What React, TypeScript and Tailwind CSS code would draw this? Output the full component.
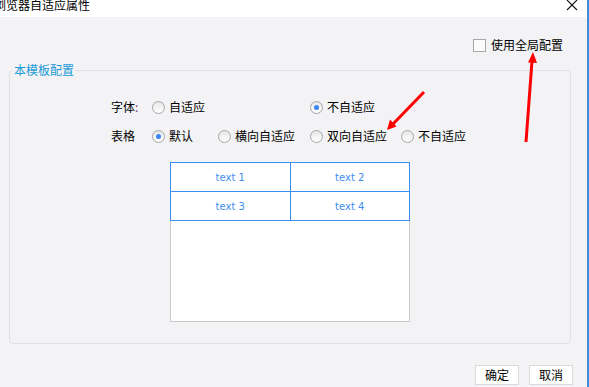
import React from 'react';

const Radio = ({ checked }: { checked?: boolean }) => (
    <span className="w-[13px] h-[13px] shrink-0 rounded-full border border-[#a6a6a6] bg-linear-to-b from-[#e6e6e6] to-white flex items-center justify-center">
        {checked && <span className="w-[5px] h-[5px] rounded-full bg-[#3b87f2]" />}
    </span>
);

const Option = ({ label, checked, w }: { label: string; checked?: boolean; w: string }) => (
    <label className={`flex items-center gap-[4px] ${w}`}>
        <Radio checked={checked} />
        <span>{label}</span>
    </label>
);

export default function App() {
    const cells = ['text 1', 'text 2', 'text 3', 'text 4'];

    return (
        <div
            className="relative w-[589px] h-[387px] overflow-hidden bg-[#f3f3f5] border-r-2 border-[#3d8fdc] text-[12px] text-black"
            style={{ fontFamily: '"Noto Sans CJK SC", "Noto Sans", sans-serif' }}
        >
            {/* Title bar */}
            <div className="h-[17px] bg-white flex items-start justify-between">
                <span className="ml-[-6px] mt-[-2px] leading-[14px] whitespace-nowrap">浏览器自适应属性</span>
                <svg width="12" height="12" viewBox="0 0 12 12" className="mr-[9px] mt-[-1px]">
                    <path d="M1 1 L11 11 M11 1 L1 11" stroke="#111" strokeWidth="1.1" fill="none" />
                </svg>
            </div>

            {/* Global config */}
            <div className="pt-[21px] pr-[24px] flex justify-end">
                <label className="flex items-center gap-[5px] h-[14px] leading-[14px]">
                    <span className="w-[13px] h-[13px] border border-[#a8a8a8] bg-[#fbfbfb]" />
                    <span>使用全局配置</span>
                </label>
            </div>

            {/* Template config */}
            <fieldset className="ml-[9px] mt-[11px] w-[562px] h-[281px] border border-[#e1e1e4] rounded-[4px]">
                <legend className="ml-[2px] px-[2px] leading-[14px] text-[#1b9ad8]">本模板配置</legend>

                <div className="mt-[22px] pl-[101px] flex items-center h-[16px]">
                    <span className="w-[41px]">
                        字体<span className="text-[#7b3f8c]">:</span>
                    </span>
                    <Option label="自适应" w="w-[158px]" />
                    <Option label="不自适应" checked w="w-auto" />
                </div>

                <div className="mt-[13px] pl-[101px] flex items-center h-[16px]">
                    <span className="w-[41px]">表格</span>
                    <Option label="默认" checked w="w-[66px]" />
                    <Option label="横向自适应" w="w-[92px]" />
                    <Option label="双向自适应" w="w-[91px]" />
                    <Option label="不自适应" w="w-auto" />
                </div>

                <div className="mt-[18px] mx-auto w-[240px] h-[160px] flex flex-col bg-white">
                    <div className="grid grid-cols-2 gap-px p-px bg-[#3e8ef0]">
                        {cells.map((c) => (
                            <div
                                key={c}
                                className="h-[28px] bg-white flex items-center justify-center text-[10px] text-[#3e8ef0]"
                                style={{ fontFamily: '"DejaVu Sans", sans-serif' }}
                            >
                                {c}
                            </div>
                        ))}
                    </div>
                    <div className="flex-1 border-x border-b border-[#c8c8c8]" />
                </div>
            </fieldset>

            {/* Footer buttons */}
            <div className="mt-[21px] pr-[14px] flex justify-end gap-[10px]">
                <button className="w-[44px] h-[20px] bg-white border border-[#dadada] leading-[18px]">确定</button>
                <button className="w-[44px] h-[20px] bg-white border border-[#dadada] leading-[18px]">取消</button>
            </div>

            {/* Annotation arrows */}
            <svg className="absolute inset-0 pointer-events-none" width="589" height="387">
                <line x1="424" y1="92" x2="393" y2="124" stroke="#ff0000" strokeWidth="3" />
                <polygon points="387,130 396.5,126.5 390,119.5" fill="#ff0000" />
                <line x1="526" y1="142" x2="532" y2="61" stroke="#ff0000" strokeWidth="3" />
                <polygon points="533,52 537,63 528,62.5" fill="#ff0000" />
            </svg>
        </div>
    );
}
